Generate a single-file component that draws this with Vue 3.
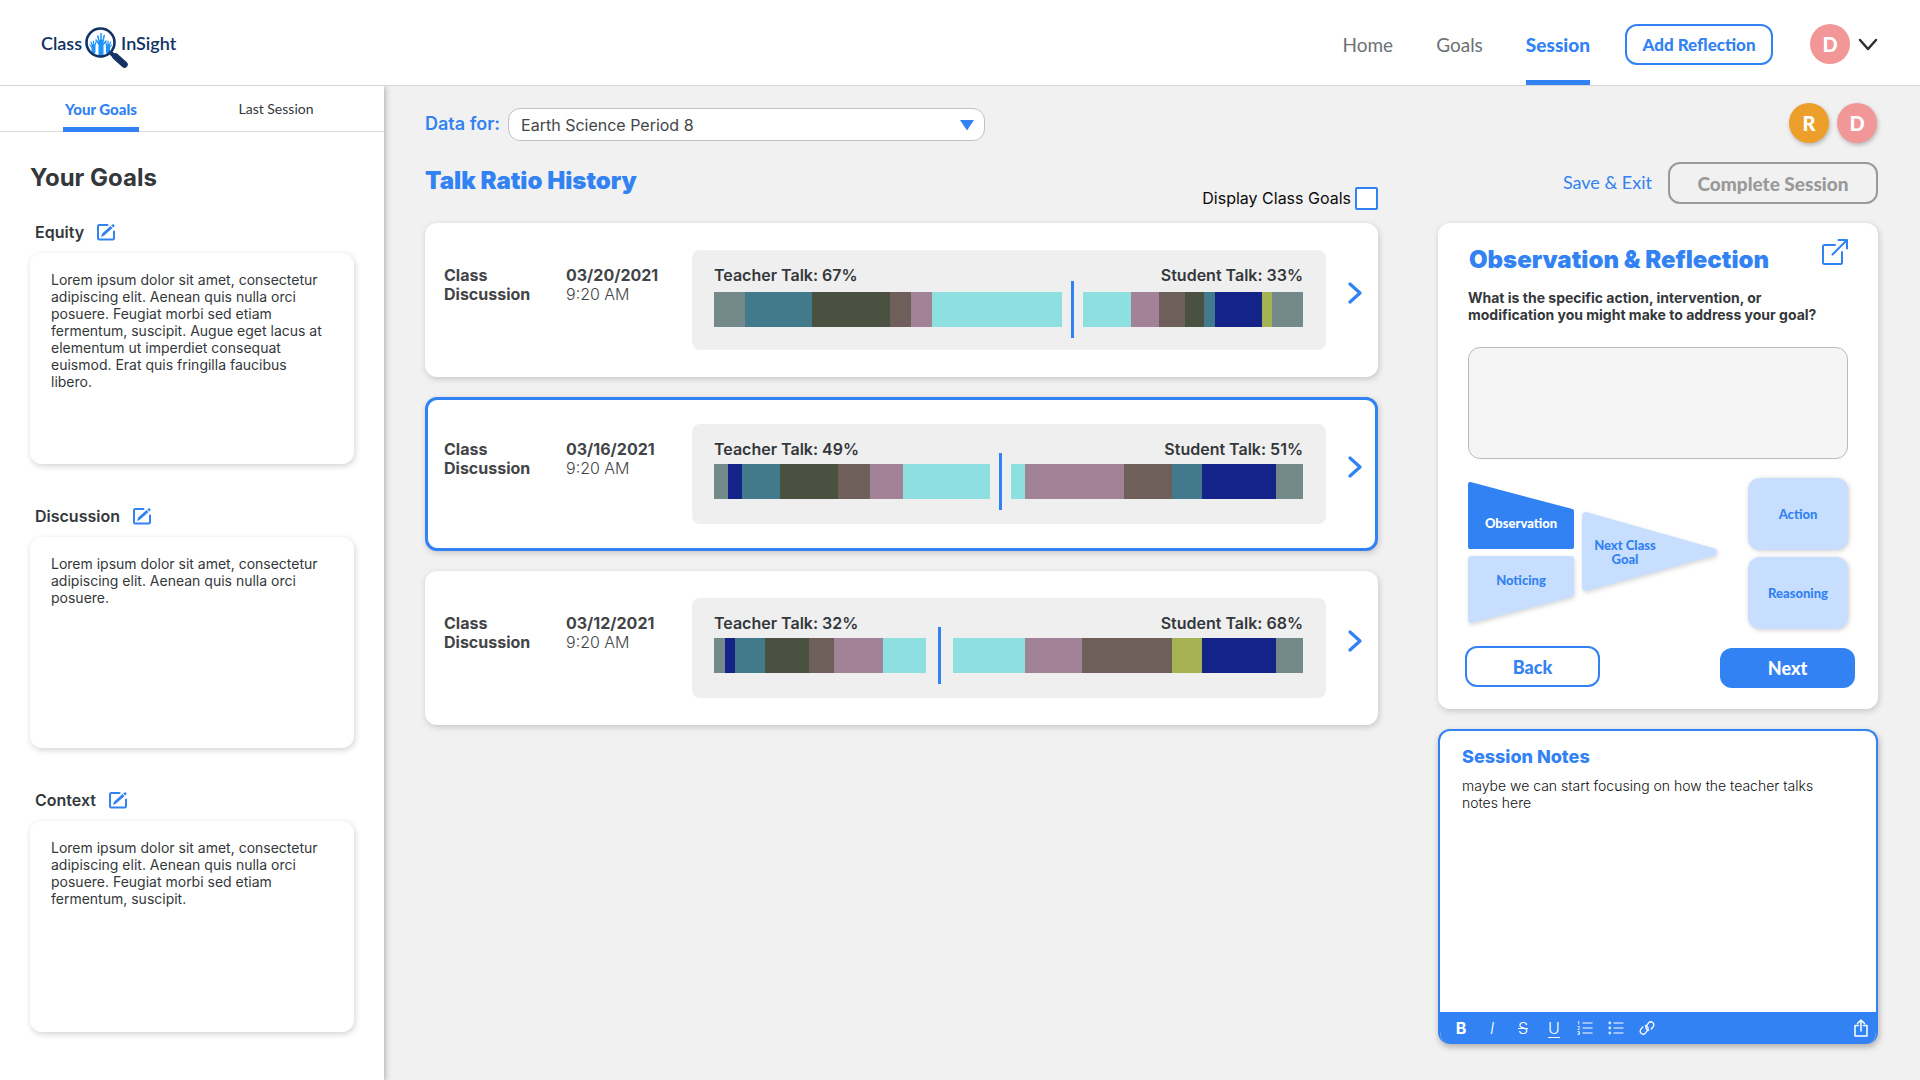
<script setup>
import { ref } from 'vue'

const navLinks = ['Home', 'Goals', 'Session']

const goals = [
  {
    name: 'Equity',
    text: 'Lorem ipsum dolor sit amet, consectetur adipiscing elit. Aenean quis nulla orci posuere. Feugiat morbi sed etiam fermentum, suscipit. Augue eget lacus at elementum ut imperdiet consequat euismod. Erat quis fringilla faucibus libero.',
  },
  {
    name: 'Discussion',
    text: 'Lorem ipsum dolor sit amet, consectetur adipiscing elit. Aenean quis nulla orci posuere.',
  },
  {
    name: 'Context',
    text: 'Lorem ipsum dolor sit amet, consectetur adipiscing elit. Aenean quis nulla orci posuere. Feugiat morbi sed etiam fermentum, suscipit.',
  },
]

const slate = '#748a8a'
const teal = '#437a8b'
const moss = '#4b5140'
const brown = '#6e5f5b'
const mauve = '#a28296'
const aqua = '#8edfdf'
const navy = '#132388'
const olive = '#a5b352'

// Each segment is [colour, share of the bar].
const sessions = [
  {
    date: '03/20/2021',
    teacher: 67,
    student: 33,
    gap: 21,
    teacherSegments: [[slate, 31], [teal, 67], [moss, 78], [brown, 21], [mauve, 21], [aqua, 131]],
    studentSegments: [[aqua, 48], [mauve, 28], [brown, 26], [moss, 19], [teal, 11], [navy, 47], [olive, 10], [slate, 31]],
  },
  {
    date: '03/16/2021',
    teacher: 49,
    student: 51,
    gap: 21,
    selected: true,
    teacherSegments: [[slate, 14], [navy, 14], [teal, 38], [moss, 58], [brown, 32], [mauve, 33], [aqua, 87]],
    studentSegments: [[aqua, 14], [mauve, 99], [brown, 48], [teal, 30], [navy, 74], [slate, 27]],
  },
  {
    date: '03/12/2021',
    teacher: 32,
    student: 68,
    gap: 27,
    teacherSegments: [[slate, 11], [navy, 10], [teal, 30], [moss, 44], [brown, 25], [mauve, 49], [aqua, 43]],
    studentSegments: [[aqua, 72], [mauve, 57], [brown, 90], [olive, 30], [navy, 74], [slate, 27]],
  },
]

const period = ref('Earth Science Period 8')
const showGoals = ref(false)
const reflection = ref('')
const notes = ref('maybe we can start focusing on how the teacher talks notes here')
</script>

<template>
  <div class="page">
    <header class="topbar">
      <a class="logo" href="#" aria-label="Class InSight">
        <span>Class</span>
        <svg width="46" height="44" viewBox="0 0 46 44" aria-hidden="true">
          <g fill="none" stroke="#1e93fb" stroke-linecap="round">
            <path d="M18 30V17" stroke-width="5" />
            <path d="M16 16l-1.200-5M18 15V8.500M20 16l1.200-5.500M16 19l-3-4M20.500 19l2.500-3" stroke-width="1.500" />
            <path d="M10.500 27V21" stroke-width="4" />
            <path d="M9 20l-1-3M10.500 20v-4M12 20l1-3M8.500 22l-1.500-2" stroke-width="1.200" />
            <path d="M25 27V21" stroke-width="4" />
            <path d="M23.500 20l-1-3M25 20v-4M26.500 20l1-3M27 22l1.500-2" stroke-width="1.200" />
          </g>
          <circle cx="17.500" cy="17.500" r="14" fill="none" stroke="#123264" stroke-width="2.600" />
          <path d="M28 28l3 3" stroke="#123264" stroke-width="4" />
          <path d="M32.500 31.500l9 8" stroke="#123264" stroke-width="6.500" stroke-linecap="round" />
        </svg>
        <span>InSight</span>
      </a>
      <nav class="nav">
        <a v-for="link in navLinks" :key="link" href="#" :class="{ active: link === 'Session' }">{{ link }}</a>
      </nav>
      <button class="outline add" type="button">Add Reflection</button>
      <button class="account" type="button" aria-label="Account menu">
        <span class="avatar">D</span>
        <svg width="20" height="14" viewBox="0 0 20 14" fill="none" stroke="#2d3134" stroke-width="2.500" stroke-linecap="round" stroke-linejoin="round" aria-hidden="true">
          <path d="M2 3l8 9 8-9" />
        </svg>
      </button>
    </header>

    <div class="body">
      <aside class="sidebar">
        <nav class="tabs">
          <a class="active" href="#"><span>Your Goals</span></a>
          <a href="#"><span>Last Session</span></a>
        </nav>
        <div class="goals">
          <h2>Your Goals</h2>
          <section v-for="goal in goals" :key="goal.name" class="goal">
            <div class="goal-head">
              <h3>{{ goal.name }}</h3>
              <button class="plain" type="button" :aria-label="`Edit ${goal.name}`">
                <svg width="18" height="17" viewBox="0 0 18 17" aria-hidden="true">
                  <path d="M10.500 1H2.200Q1 1 1 2.200V14.300Q1 15.500 2.200 15.500H15.800Q17 15.500 17 14.300V7.500" fill="none" stroke="#3282f3" stroke-width="2" stroke-linecap="round" />
                  <path d="M4 13l1.200-3.600 8.300-7.300 2 2-8.300 7.400zM14.300 1.500l1-.9q.8-.6 1.500 0l.5.5q.6.800 0 1.400l-1 .9z" fill="#3282f3" />
                </svg>
              </button>
            </div>
            <p class="goal-text">{{ goal.text }}</p>
          </section>
        </div>
      </aside>

      <main class="main">
        <section class="history">
          <div class="data-for">
            <label for="period">Data for:</label>
            <div class="select">
              <select id="period" v-model="period">
                <option>Earth Science Period 8</option>
              </select>
              <svg width="14" height="12" viewBox="0 0 14 12" aria-hidden="true"><path d="M0 1h14L7 11.500z" fill="#3282f3" /></svg>
            </div>
          </div>
          <div class="history-head">
            <h1>Talk Ratio History</h1>
            <label class="check">Display Class Goals<input v-model="showGoals" type="checkbox"></label>
          </div>
          <div class="cards">
            <article v-for="s in sessions" :key="s.date" class="session" :class="{ selected: s.selected }">
              <h3>Class Discussion</h3>
              <p class="when"><b>{{ s.date }}</b><span>9:20 AM</span></p>
              <div class="ratio">
                <div class="ratio-labels">
                  <span>Teacher Talk: {{ s.teacher }}%</span>
                  <span>Student Talk: {{ s.student }}%</span>
                </div>
                <div class="bar">
                  <i v-for="(seg, i) in s.teacherSegments" :key="'t' + i" :style="{ background: seg[0], flexGrow: seg[1] }"></i>
                  <div class="divider" :style="{ flexGrow: s.gap }"></div>
                  <i v-for="(seg, i) in s.studentSegments" :key="'s' + i" :style="{ background: seg[0], flexGrow: seg[1] }"></i>
                </div>
              </div>
              <button class="plain open" type="button" aria-label="Open session">
                <svg width="14" height="22" viewBox="0 0 14 22" fill="none" stroke="#3282f3" stroke-width="3.200" stroke-linecap="round" stroke-linejoin="round" aria-hidden="true"><path d="M2 2l10 9-10 9" /></svg>
              </button>
            </article>
          </div>
        </section>

        <section class="side">
          <div class="people">
            <span class="avatar amber">R</span>
            <span class="avatar">D</span>
          </div>
          <div class="actions">
            <a href="#">Save &amp; Exit</a>
            <button class="outline complete" type="button">Complete Session</button>
          </div>

          <article class="reflect">
            <div class="reflect-head">
              <h2>Observation &amp; Reflection</h2>
              <button class="plain" type="button" aria-label="Open in a new window">
                <svg width="26" height="26" viewBox="0 0 26 26" fill="none" stroke="#3282f3" stroke-width="2" stroke-linecap="round" stroke-linejoin="round" aria-hidden="true">
                  <path d="M13 6H2.500Q1 6 1 7.500V23.500Q1 25 2.500 25H18.500Q20 25 20 23.500V13M10.500 15.500L24 2M16.500 1H25V9.500" />
                </svg>
              </button>
            </div>
            <label class="question" for="reflection">What is the specific action, intervention, or modification you might make to address your goal?</label>
            <textarea id="reflection" v-model="reflection" class="answer"></textarea>
            <div class="steps">
              <div class="pair">
                <button class="step observation" type="button">
                  <svg width="106" height="67" viewBox="0 0 106 67" aria-hidden="true"><path d="M2 2L104 29V65H2z" fill="#3282f3" stroke="#3282f3" stroke-width="4" stroke-linejoin="round" /></svg>
                  <span>Observation</span>
                </button>
                <button class="step noticing" type="button">
                  <svg width="106" height="67" viewBox="0 0 106 67" aria-hidden="true"><path d="M3 3H103V38L3 64z" fill="#c7deff" stroke="#c7deff" stroke-width="6" stroke-linejoin="round" /></svg>
                  <span>Noticing</span>
                </button>
              </div>
              <button class="step next-goal" type="button">
                <svg width="135" height="79" viewBox="0 0 135 79" aria-hidden="true"><path d="M4 4L131 40 4 75z" fill="#c7deff" stroke="#c7deff" stroke-width="8" stroke-linejoin="round" /></svg>
                <span>Next Class Goal</span>
              </button>
              <div class="tiles">
                <button class="tile" type="button">Action</button>
                <button class="tile" type="button">Reasoning</button>
              </div>
            </div>
            <div class="pager">
              <button class="outline back" type="button">Back</button>
              <button class="next" type="button">Next</button>
            </div>
          </article>

          <article class="notes">
            <label for="notes">Session Notes</label>
            <textarea id="notes" v-model="notes"></textarea>
            <div class="toolbar">
              <button type="button" aria-label="Bold"><b>B</b></button>
              <button type="button" aria-label="Italic"><em>I</em></button>
              <button type="button" aria-label="Strikethrough"><s>S</s></button>
              <button type="button" aria-label="Underline"><u>U</u></button>
              <button type="button" aria-label="Numbered list">
                <svg width="16" height="14" viewBox="0 0 16 14" fill="none" stroke="#fff" aria-hidden="true">
                  <path d="M5.500 2H15.500M5.500 7H15.500M5.500 12H15.500" stroke-width="1.200" />
                  <path d="M.8 1.200L1.800.5V3.500M.6 5.500H2.400V7L.8 8.500H2.600M.6 10.500H2.400V13.500H.6M1 12H2.400" stroke-width=".8" />
                </svg>
              </button>
              <button type="button" aria-label="Bulleted list">
                <svg width="16" height="14" viewBox="0 0 16 14" aria-hidden="true">
                  <path d="M5.500 2H15.500M5.500 7H15.500M5.500 12H15.500" stroke="#fff" stroke-width="1.200" />
                  <g fill="#fff" fill-opacity=".8"><circle cx="1.800" cy="2" r="1.400" /><circle cx="1.800" cy="7" r="1.400" /><circle cx="1.800" cy="12" r="1.400" /></g>
                </svg>
              </button>
              <button type="button" aria-label="Link">
                <svg width="16" height="16" viewBox="0 0 16 16" fill="none" stroke="#fff" stroke-width="1.300" stroke-linecap="round" aria-hidden="true">
                  <path d="M9.700 10.300a3 3 0 0 1-2.400-4.500L9.800 2.600a3 3 0 0 1 4.600 3.700L12.300 9" />
                  <path d="M6.300 5.700a3 3 0 0 1 2.400 4.500L6.200 13.400a3 3 0 0 1-4.600-3.700L3.700 7" />
                </svg>
              </button>
              <button class="share" type="button" aria-label="Share">
                <svg width="14" height="18" viewBox="0 0 14 18" fill="none" stroke="#fff" stroke-width="1.500" stroke-linecap="round" stroke-linejoin="round" aria-hidden="true">
                  <path d="M4.500 6.500H1V17H13V6.500H9.500M7 12V1.200M3.500 4.500L7 1l3.500 3.500" />
                </svg>
              </button>
            </div>
          </article>
        </section>
      </main>
    </div>
  </div>
</template>

<style>
body {
  background: #f1f1f1;
}
</style>

<style scoped>
.page {
  --blue: #3282f3;
  --soft: 1px 2px 6px rgba(0, 0, 0, .18);
  display: flex;
  flex-direction: column;
  min-height: 100vh;
  font-family: Inter, "Liberation Sans", sans-serif;
  font-size: 14px;
  line-height: 17px;
  color: #34383b;
}
.page *,
.page {
  box-sizing: border-box;
}
h1, h2, h3, p {
  margin: 0;
}
a {
  text-decoration: none;
  color: inherit;
}
button {
  font-family: Lato, sans-serif;
  padding: 0;
  border: 0;
  background: none;
  color: var(--blue);
}
.plain, .account {
  display: flex;
  align-items: center;
}
svg {
  display: block;
  flex: none;
}

/* Top bar */
.topbar {
  display: flex;
  height: 86px;
  padding: 0 42px 0 41px;
  border-bottom: 1px solid #d4d6d8;
  background: #fff;
  font-family: Lato, sans-serif;
}
.logo {
  display: flex;
  align-items: flex-start;
  margin-right: auto;
  color: #123264;
  font-size: 18px;
  font-weight: 600;
  line-height: 20px;
}
.logo span {
  margin-top: 33px;
}
.logo svg {
  margin: 25px -8px 0 1px;
}
.nav {
  display: flex;
  gap: 43px;
  margin-right: 35px;
  color: #6c7175;
  font-size: 19px;
  line-height: 24px;
}
.nav a {
  padding-top: 33px;
}
.nav .active {
  border-bottom: 5px solid var(--blue);
  border-radius: 3px 3px 0 0;
  color: var(--blue);
  font-weight: 900;
}
.outline {
  border: 2px solid var(--blue);
  border-radius: 12px;
  background: #fff;
  font-weight: 900;
}
.add {
  width: 148px;
  height: 41px;
  margin: 24px 37px 0 0;
  font-size: 17px;
}
.account {
  gap: 8px;
  height: 40px;
  margin-top: 24px;
}
.avatar {
  display: flex;
  align-items: center;
  justify-content: center;
  width: 40px;
  height: 40px;
  border-radius: 50%;
  background: #f29797;
  color: #fff;
  font: 900 20px Lato, sans-serif;
}
.amber {
  background: #ed9f2b;
}

/* Sidebar */
.body {
  display: flex;
  flex: 1;
}
.sidebar {
  flex: none;
  width: 384px;
  background: #fff;
  box-shadow: 1px 1px 6px rgba(0, 0, 0, .3);
  clip-path: inset(0 -12px 0 0);
}
.tabs {
  display: flex;
  gap: 99px;
  height: 46px;
  padding-left: 63px;
  border-bottom: 1px solid #d9dbdd;
  font: 14px Lato, sans-serif;
}
.tabs a {
  display: flex;
  justify-content: center;
  width: 76px;
  padding-top: 14px;
  white-space: nowrap;
}
.tabs .active {
  height: 46px;
  border-bottom: 5px solid var(--blue);
  border-radius: 3px 3px 0 0;
  color: var(--blue);
  font-size: 15px;
  font-weight: 900;
}
.goals {
  padding: 31px 30px 40px;
}
.goals h2 {
  font-size: 24px;
  font-weight: 700;
  line-height: 29px;
}
.goal {
  margin-top: 42px;
}
h2 + .goal {
  margin-top: 30px;
}
.goal-head {
  display: flex;
  align-items: center;
  gap: 13px;
  height: 20px;
  margin: 0 0 11px 5px;
}
.goal h3 {
  font-size: 16px;
  font-weight: 600;
  line-height: 20px;
}
.goal-text {
  min-height: 211px;
  padding: 18px 28px 18px 21px;
  border-radius: 12px;
  box-shadow: var(--soft);
}

/* Talk ratio history */
.main {
  display: flex;
  flex: 1;
  align-items: flex-start;
  gap: 60px;
  min-width: 0;
  padding: 17px 42px 36px 41px;
}
.history {
  flex: 1;
  min-width: 0;
  padding-top: 5px;
}
.data-for {
  display: flex;
  align-items: center;
  gap: 8px;
}
.data-for label {
  padding-bottom: 2px;
  color: var(--blue);
  font-size: 18px;
  font-weight: 600;
  line-height: 31px;
}
.select {
  position: relative;
  width: 50%;
}
.select select {
  appearance: none;
  width: 100%;
  height: 33px;
  padding: 0 12px;
  border: 1px solid #bfc1c3;
  border-radius: 12px;
  background: #fff;
  color: #424648;
  font: 16px Inter, sans-serif;
}
.select svg {
  position: absolute;
  top: 11px;
  right: 11px;
}
.history-head {
  display: flex;
  justify-content: space-between;
  height: 44px;
  margin: 25px 0 13px;
}
.history-head h1 {
  color: var(--blue);
  font-size: 24px;
  font-weight: 900;
  line-height: 29px;
}
.check {
  display: flex;
  align-items: center;
  align-self: flex-end;
  gap: 4px;
  color: #0b0b0b;
  font-size: 16px;
}
.check input {
  appearance: none;
  width: 23px;
  height: 23px;
  margin: 0;
  border: 2px solid var(--blue);
  border-radius: 2px;
  background: #fff;
}
.cards {
  display: flex;
  flex-direction: column;
  gap: 20px;
}
.session {
  display: grid;
  grid-template-columns: 122px 126px 1fr 52px;
  height: 154px;
  padding: 27px 0 27px 19px;
  border-radius: 12px;
  background: #fff;
  box-shadow: var(--soft);
  color: #424447;
  font-size: 16px;
  line-height: 19px;
}
.selected {
  padding: 24px 0 24px 16px;
  border: 3px solid var(--blue);
  grid-template-columns: 122px 126px 1fr 49px;
}
.session h3 {
  width: 100px;
  padding-top: 16px;
  font-size: 16px;
  font-weight: 700;
}
.when {
  display: flex;
  flex-direction: column;
  padding-top: 16px;
  font-weight: 300;
}
.when b {
  font-weight: 700;
}
.ratio {
  height: 100px;
  padding: 16px 23px 0 22px;
  border-radius: 8px;
  background: #efefef;
}
.ratio-labels {
  display: flex;
  justify-content: space-between;
  color: #34383b;
  font-weight: 600;
}
.bar {
  display: flex;
  height: 35px;
  margin-top: 5px;
}
.session:first-child .bar {
  margin-top: 7px;
}
.bar i {
  flex: 0 1 0;
}
.divider {
  display: flex;
  flex: 0 1 0;
  justify-content: center;
  margin: -11px 0;
}
.divider::before {
  content: "";
  width: 3px;
  background: var(--blue);
}
.open {
  align-self: start;
  margin: 32px 0 0 22px;
}

/* Right column */
.side {
  flex: none;
  width: 440px;
}
.people {
  display: flex;
  justify-content: flex-end;
  gap: 8px;
  padding-right: 1px;
}
.people .avatar {
  box-shadow: 1px 2px 4px rgba(0, 0, 0, .25);
}
.actions {
  display: flex;
  align-items: center;
  justify-content: flex-end;
  gap: 16px;
  margin: 19px 0;
  color: var(--blue);
  font: 18px Lato, sans-serif;
}
.actions a {
  padding-bottom: 2px;
}
.complete {
  width: 210px;
  height: 42px;
  border-color: #999;
  background: none;
  color: #999;
  font-size: 19px;
}
.reflect {
  height: 486px;
  padding: 16px 30px 0;
  border-radius: 12px;
  background: #fff;
  box-shadow: var(--soft);
}
.reflect-head {
  display: flex;
  justify-content: space-between;
}
.reflect-head h2 {
  padding: 6px 0 0 1px;
  color: var(--blue);
  font-size: 24px;
  font-weight: 900;
  line-height: 29px;
}
.reflect-head button {
  align-self: flex-start;
}
.question {
  display: block;
  margin-top: 15px;
  font-weight: 700;
}
.answer {
  display: block;
  width: 100%;
  height: 112px;
  margin-top: 24px;
  padding: 12px;
  resize: none;
  border: 1px solid #bbb;
  border-radius: 12px;
  background: #f5f5f5;
  font: 14px Inter, sans-serif;
}
.steps {
  display: flex;
  align-items: flex-start;
  margin-top: 19px;
}
.pair, .tiles {
  display: flex;
  flex-direction: column;
  gap: 7px;
}
.pair {
  padding-top: 4px;
}
.tiles {
  margin-left: auto;
}
.step {
  display: grid;
  font-size: 13px;
  font-weight: 900;
  line-height: 14px;
}
.step svg, .step span {
  grid-area: 1 / 1;
}
.step svg {
  filter: drop-shadow(1px 2px 2px rgba(0, 0, 0, .15));
}
.step span {
  align-self: center;
  z-index: 1;
}
.observation {
  color: #fff;
}
.observation svg {
  filter: none;
}
.observation span {
  padding-top: 14px;
}
.noticing span {
  padding-bottom: 20px;
}
.next-goal {
  margin: 34px 0 0 8px;
}
.next-goal span {
  width: 76px;
  padding-left: 10px;
}
.tile {
  width: 100px;
  height: 72px;
  border-radius: 12px;
  background: #c7deff;
  box-shadow: 1px 1px 5px rgba(0, 0, 0, .2);
  font-size: 13px;
  font-weight: 900;
}
.pager {
  display: flex;
  justify-content: space-between;
  margin: 17px -7px 0 -3px;
}
.pager button {
  width: 135px;
  height: 41px;
  font-size: 18px;
  font-weight: 900;
}
.pager .next {
  height: 40px;
  margin-top: 2px;
  border-radius: 12px;
  background: var(--blue);
  color: #fff;
}

/* Notes */
.notes {
  display: flex;
  flex-direction: column;
  height: 315px;
  margin-top: 20px;
  overflow: hidden;
  border: 2px solid var(--blue);
  border-bottom: 0;
  border-radius: 12px;
  background: #fff;
  box-shadow: 1px 3px 6px rgba(0, 0, 0, .28);
}
.notes label {
  padding: 15px 22px 0;
  color: var(--blue);
  font-size: 18px;
  font-weight: 800;
  line-height: 22px;
}
.notes textarea {
  flex: 1;
  padding: 9px 50px 0 22px;
  resize: none;
  border: 0;
  background: none;
  color: #111;
  font: 300 14px/17px Inter, sans-serif;
}
.toolbar {
  display: flex;
  align-items: center;
  gap: 11px;
  height: 32px;
  padding: 0 5px 0 11px;
  background: var(--blue);
}
.toolbar button {
  display: flex;
  justify-content: center;
  width: 20px;
  color: #fff;
  font: 16px/19px Inter, sans-serif;
}
.toolbar em, .toolbar s, .toolbar u {
  font-weight: 300;
}
.toolbar u {
  text-underline-offset: 3px;
}
.toolbar .share {
  margin-left: auto;
}
</style>
